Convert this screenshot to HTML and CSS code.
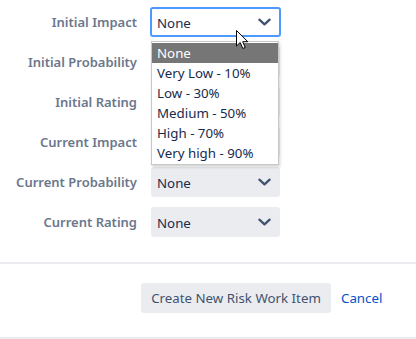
FILE: index.html
```html
<!DOCTYPE html>
<html>
<head>
<meta charset="utf-8">
<link rel="stylesheet" href="styles.css">
</head>
<body>
<div class="form">
  <div class="row">
    <label class="lbl">Initial Impact</label>
    <div class="field">
      <div class="select focused"><span>None</span><svg class="chev" viewBox="0 0 14 8"><path d="M1.5 1.5 L7 6.5 L12.5 1.5" /></svg></div>
      <ul class="menu">
        <li class="sel">None</li>
        <li>Very Low - 10%</li>
        <li>Low - 30%</li>
        <li>Medium - 50%</li>
        <li>High - 70%</li>
        <li>Very high - 90%</li>
      </ul>
      <svg class="cursor" viewBox="0 0 13 20"><path d="M0.5 0.5 L0.5 16 L4.2 12.5 L6.8 18.5 L9.2 17.5 L6.7 11.7 L11.8 11.7 Z" /></svg>
    </div>
  </div>
  <div class="row">
    <label class="lbl">Initial Probability</label>
    <div class="field"><div class="select covered"><span>None</span><svg class="chev" viewBox="0 0 14 8"><path d="M1.5 1.5 L7 6.5 L12.5 1.5" /></svg></div></div>
  </div>
  <div class="row">
    <label class="lbl">Initial Rating</label>
    <div class="field"><div class="select covered"><span>None</span><svg class="chev" viewBox="0 0 14 8"><path d="M1.5 1.5 L7 6.5 L12.5 1.5" /></svg></div></div>
  </div>
  <div class="row">
    <label class="lbl">Current Impact</label>
    <div class="field"><div class="select covered"><span>None</span><svg class="chev" viewBox="0 0 14 8"><path d="M1.5 1.5 L7 6.5 L12.5 1.5" /></svg></div></div>
  </div>
  <div class="row">
    <label class="lbl">Current Probability</label>
    <div class="field"><div class="select"><span>None</span><svg class="chev" viewBox="0 0 14 8"><path d="M1.5 1.5 L7 6.5 L12.5 1.5" /></svg></div></div>
  </div>
  <div class="row">
    <label class="lbl">Current Rating</label>
    <div class="field"><div class="select"><span>None</span><svg class="chev" viewBox="0 0 14 8"><path d="M1.5 1.5 L7 6.5 L12.5 1.5" /></svg></div></div>
  </div>
</div>
<div class="footer">
  <button class="btn">Create New Risk Work Item</button>
  <a class="cancel" href="#">Cancel</a>
</div>
</body>
</html>
```
FILE: styles.css
```css
html, body {
  margin: 0;
  padding: 0;
  background: #fff;
}
body {
  font-family: "Noto Sans", "Open Sans", sans-serif;
  font-size: 13.3px;
  color: #172b4d;
  width: 416px;
  height: 339px;
  overflow: hidden;
}
.form {
  padding-top: 7px;
  display: flex;
  flex-direction: column;
  gap: 10px;
}
.row {
  display: grid;
  grid-template-columns: 137px 129px;
  column-gap: 14px;
  height: 30px;
  align-items: center;
}
.lbl {
  text-align: right;
  font-weight: 600;
  color: #6b778c;
  font-size: 13px;
  white-space: nowrap;
}
.field {
  position: relative;
  height: 30px;
}
.select {
  box-sizing: border-box;
  height: 30px;
  width: 129px;
  background: #ebecf0;
  border-radius: 3px;
  display: flex;
  align-items: center;
  justify-content: space-between;
  padding: 2px 9px 0 6px;
  color: #172b4d;
}
.select.covered span {
  visibility: hidden;
}
.select.focused {
  background: #fff;
  border: 2px solid #4c9aff;
  margin-left: -1px;
  width: 131px;
  padding: 1px 8px 0 5px;
}
.chev {
  width: 13px;
  height: 8px;
  fill: none;
  stroke: #42526e;
  stroke-width: 2.5;
  stroke-linecap: round;
  stroke-linejoin: round;
  margin-top: -2px;
}
.menu {
  position: absolute;
  top: 34px;
  left: 0;
  width: 128px;
  margin: 0;
  padding: 1px 0;
  list-style: none;
  background: #fff;
  border: 1px solid #c8c8c8;
  box-shadow: 1px 2px 3px rgba(0,0,0,0.18);
  z-index: 5;
  box-sizing: border-box;
}
.menu li {
  height: 20px;
  line-height: 20px;
  padding-left: 5px;
  color: #172b4d;
  white-space: nowrap;
}
.menu li.sel {
  background: #767676;
  color: #fff;
}
.cursor {
  position: absolute;
  left: 85px;
  top: 23px;
  width: 13px;
  height: 20px;
  z-index: 10;
  fill: #fff;
  stroke: #000;
  stroke-width: 1;
  stroke-linejoin: miter;
}
.footer {
  margin-top: 25px;
  border-top: 2px solid #ebecf0;
  border-bottom: 2px solid #ebecf0;
  height: 54px;
  display: flex;
  align-items: flex-start;
  padding-top: 19px;
  padding-left: 141px;
}
.btn {
  font-family: inherit;
  font-size: 13.3px;
  height: 30px;
  width: 190px;
  border: none;
  border-radius: 3px;
  background: #ebecf0;
  color: #42526e;
  padding: 0 0 1px;
}
.cancel {
  margin-left: 10px;
  margin-top: 6px;
  color: #0052cc;
  text-decoration: none;
}
```
